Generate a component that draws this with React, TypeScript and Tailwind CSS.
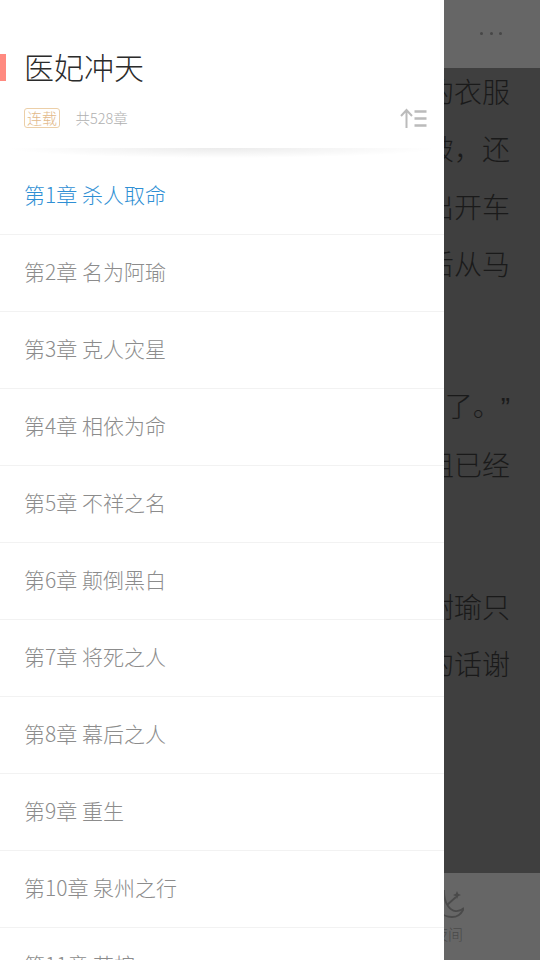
const chapters = [
  "第1章 杀人取命",
  "第2章 名为阿瑜",
  "第3章 克人灾星",
  "第4章 相依为命",
  "第5章 不祥之名",
  "第6章 颠倒黑白",
  "第7章 将死之人",
  "第8章 幕后之人",
  "第9章 重生",
  "第10章 泉州之行",
  "第11章 花棺",
];

function SortIcon() {
  return (
    <svg width="27" height="20" viewBox="0 0 27 20" fill="none" stroke="#bbbbbb" strokeWidth="2">
      <path d="M6.500 20V2M1 8l5.500-6 5.500 6" />
      <path strokeWidth="2.500" d="M14.500 3.500h12M14.500 10.500h12M14.500 17.500h12" />
    </svg>
  );
}

function MoonIcon() {
  return (
    <svg width="32" height="32" viewBox="0 0 32 32" fill="none" stroke="#4a4a4a" strokeWidth="1.800">
      <path d="M12 3c0 7 1 12 4 16 4 6 11 7 16 2" />
      <path d="M4 10c-2 12 6 20 16 20 6 0 10-4 12-9" />
      <path d="M15 18l9-8" />
      <path d="M25 4l1.200 2.800L29 8l-2.800 1.200L25 12l-1.200-2.800L21 8l2.800-1.200z" fill="#4a4a4a" stroke="none" />
    </svg>
  );
}

function Reader() {
  return (
    <div className="flex flex-col h-[960px] bg-[#3f3f3f]">
      <div className="h-[68px] bg-[#666666] flex items-center justify-end pr-[38px] shrink-0">
        <div className="flex gap-[6.500px] mb-[2px]">
          <span className="w-[3px] h-[3px] rounded-full bg-[#474747]" />
          <span className="w-[3px] h-[3px] rounded-full bg-[#474747]" />
          <span className="w-[3px] h-[3px] rounded-full bg-[#474747]" />
        </div>
      </div>
      <div className="flex-1 -mt-[5px] pr-[30px] text-[28px] leading-[57.3px] text-[#1a1a1a] text-right whitespace-nowrap font-light">
        <p>她身上的衣服</p>
        <p>被人扯破，还</p>
        <p>被他推出开车</p>
        <p>的人随后从马</p>
        <p className="mt-[85px]">
          人已经死了。<span className="ml-[14px] font-['Liberation_Sans',sans-serif]">”</span>
        </p>
        <p>而她姐姐已经</p>
        <p className="mt-[84px]">医妃谢瑜只</p>
        <p>听到他的话谢</p>
      </div>
      <div className="h-[87px] bg-[#666666] shrink-0 flex justify-start pl-[432px] text-[#4a4a4a]">
        <div className="flex flex-col items-center pt-[14px] w-[32px]">
          <MoonIcon />
          <span className="text-[15px] leading-[20px] mt-[5px] whitespace-nowrap font-light">夜间</span>
        </div>
      </div>
    </div>
  );
}

export default function App() {
  return (
    <div className="relative w-[540px] h-[960px] overflow-hidden font-['Noto_Sans_CJK_SC',sans-serif]">
      <Reader />
      <div className="absolute left-0 top-0 w-[444px] h-[960px] bg-white overflow-hidden">
        <div className="h-[148px] pt-[44px] bg-white">
          <div className="flex items-center">
            <span className="w-[6px] h-[27px] mt-[2px] bg-[#ff8a80] mr-[18px]" />
            <h1 className="text-[30px] leading-[44px] text-[#2b2b2b] font-light">医妃冲天</h1>
          </div>
          <div className="flex items-center pl-[24px] pr-[17px] mt-[20px]">
            <span className="w-[36px] h-[20px] border border-[#eccfa8] rounded-[3px] text-[15px] leading-[18px] text-center text-[#e2b98a] font-light">
              连载
            </span>
            <span className="ml-[15.500px] text-[14.500px] leading-[20px] text-[#b0b0b0] font-light">共528章</span>
            <span className="ml-auto">
              <SortIcon />
            </span>
          </div>
        </div>
        <div className="h-[10px] mx-[6px] bg-[radial-gradient(ellipse_50%_100%_at_50%_0%,rgba(0,0,0,0.08),transparent)]" />
        <ul>
          {chapters.map((title, i) => (
            <li
              key={title}
              className={
                i === 0
                  ? "h-[77px] border-b border-[#f2f2f2] text-[21px] leading-[72px] pl-[24px] font-light text-[#2f8fd4]"
                  : "h-[77px] border-b border-[#f2f2f2] text-[21px] leading-[72px] pl-[24px] font-light text-[#8c8c8c]"
              }
            >
              {title}
            </li>
          ))}
        </ul>
      </div>
    </div>
  );
}
